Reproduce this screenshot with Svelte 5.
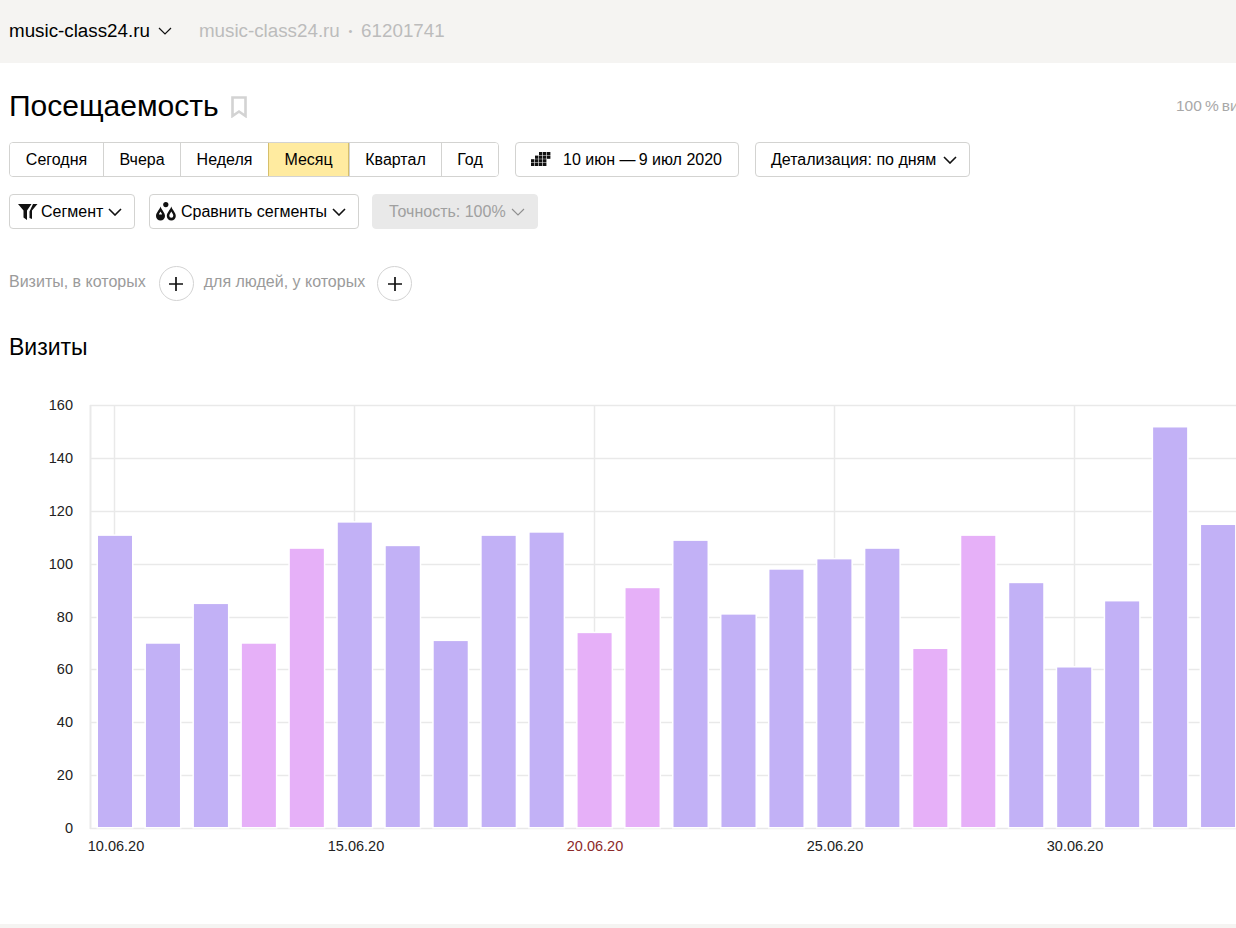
<script>
  const periods = ['Сегодня', 'Вчера', 'Неделя', 'Месяц', 'Квартал', 'Год'];
  const values = [110.5,69.7,84.7,69.7,105.6,115.5,106.6,70.7,110.5,111.7,73.7,90.7,108.6,80.7,97.7,101.6,105.6,67.7,110.5,92.6,60.7,85.7,151.5,114.6];
  const pink = [3,4,10,11,17,18];
  const yTicks = [160,140,120,100,80,60,40,20,0];
  const xTicks = [
    { x: 114.5, tx: 116, label: '10.06.20' },
    { x: 354.5, tx: 356, label: '15.06.20' },
    { x: 594.5, tx: 595, label: '20.06.20', red: true },
    { x: 834.5, tx: 835, label: '25.06.20' },
    { x: 1074.5, tx: 1075, label: '30.06.20' }
  ];
  const base = 438;
  const scale = 423 / 160;
  const yOf = (v) => base - v * scale;
  const cells = [[2,0],[3,0],[4,0],[1,1],[2,1],[3,1],[4,1],[0,2],[1,2],[2,2],[3,2],[0,3],[1,3],[2,3],[3,3]];
</script>

<div class="page">
  <header class="top">
    <span class="site">music-class24.ru</span>
    <svg class="chev-top" width="14" height="8" viewBox="0 0 14 8"><path d="M1 1l6 6 6-6" /></svg>
    <span class="crumb">music-class24.ru <span class="dot">•</span> 61201741</span>
  </header>

  <main class="content">
    <div class="title-row">
      <h1>Посещаемость</h1>
      <svg class="bookmark" width="16" height="22" viewBox="0 0 16 22"><path d="M1.5 1.5h13v18.5L8 15.5 1.5 20z" /></svg>
      <div class="share">100&thinsp;%&thinsp;визитов</div>
    </div>

    <div class="row row-periods">
      <div class="seg">
        {#each periods as p}
          <button class:active={p === 'Месяц'}>{p}</button>
        {/each}
      </div>
      <button class="btn date">
        <svg width="20" height="15" viewBox="0 0 20 15">
          {#each cells as c}<rect x={c[0] * 4} y={c[1] * 3.6} width="3.4" height="3.2" />{/each}
        </svg>
        <span>10 июн —&thinsp;9 июл 2020</span>
      </button>
      <button class="btn detail">
        <span>Детализация: по дням</span>
        <svg class="chev" width="14" height="8" viewBox="0 0 14 8"><path d="M1 1l6 6 6-6" /></svg>
      </button>
    </div>

    <div class="row row-seg">
      <button class="btn segment">
        <svg width="20" height="17" viewBox="0 0 20 17"><path d="M0 1h13.500L9 7.500V17l-3.500-2.500V7.500z" /><path d="M15 1h4.500L14 7.500V16l-2.500-1V8.500z" /></svg>
        <span>Сегмент</span>
        <svg class="chev" width="14" height="8" viewBox="0 0 14 8"><path d="M1 1l6 6 6-6" /></svg>
      </button>
      <button class="btn compare">
        <svg width="20" height="19" viewBox="0 0 20 19">
          <circle cx="9.800" cy="2.600" r="2.600" />
          <path d="M4.500 4.500c1 3.500 4.500 6 4.500 9.500a4.500 4.500 0 0 1-9 0c0-3.500 3.500-6 4.500-9.500zM4.500 9.500C3.800 10.800 3 11.500 3 12.500h3c0-1-.8-1.700-1.500-3z" fill-rule="evenodd" />
          <path d="M15.300 4.500c1 3.500 4.500 6 4.500 9.500a4.500 4.500 0 0 1-9 0c0-3.500 3.500-6 4.500-9.500zM15.300 9.500c-1 1.700-2 2.800-2 4.300a2 2 0 0 0 4 0c0-1.500-1-2.600-2-4.300z" fill-rule="evenodd" />
        </svg>
        <span>Сравнить сегменты</span>
        <svg class="chev" width="14" height="8" viewBox="0 0 14 8"><path d="M1 1l6 6 6-6" /></svg>
      </button>
      <button class="btn accuracy">
        <span>Точность: 100%</span>
        <svg class="chev thin" width="14" height="8" viewBox="0 0 14 8"><path d="M1 1l6 6 6-6" /></svg>
      </button>
    </div>

    <div class="filters">
      <span>Визиты, в которых</span>
      <button class="plus" aria-label="Добавить условие для визитов"><svg width="14" height="14" viewBox="0 0 14 14"><path d="M7 0v14M0 7h14" /></svg></button>
      <span>для людей, у которых</span>
      <button class="plus last" aria-label="Добавить условие для людей"><svg width="14" height="14" viewBox="0 0 14 14"><path d="M7 0v14M0 7h14" /></svg></button>
    </div>

    <h2>Визиты</h2>
  </main>

  <svg class="chart" width="1236" height="500" viewBox="0 0 1236 500">
    {#each yTicks as t}
      <line class="grid" x1="90" x2="1236" y1={Math.round(yOf(t)) + 0.5} y2={Math.round(yOf(t)) + 0.5} />
      <text class="ylab" x="73" y={yOf(t) + 5}>{t}</text>
    {/each}
    <line class="grid axis" x1="90.500" x2="90.500" y1="15" y2="439" />
    {#each xTicks as t}
      <line class="grid" x1={t.x} x2={t.x} y1="15" y2="438" />
      <text class="xlab" class:red={t.red} x={t.tx} y="461">{t.label}</text>
    {/each}
    {#each values as v, i}
      <rect class="bar" class:pink={pink.includes(i)} x={98 + i * 47.96} y={yOf(v)} width="34" height={v * scale - 1} />
    {/each}
  </svg>

  <div class="foot"></div>
</div>

<style>
  :global(body) { margin: 0; background: #fff; }
  .page {
    width: 1236px;
    height: 928px;
    overflow: hidden;
    position: relative;
    font-family: "Liberation Sans", Arial, sans-serif;
    color: #000;
    display: flex;
    flex-direction: column;
  }
  button { font: inherit; color: inherit; background: #fff; margin: 0; }
  .top {
    height: 63px;
    flex: none;
    background: #f5f4f2;
    display: flex;
    align-items: center;
    padding-left: 9px;
    font-size: 18.800px;
    box-sizing: border-box;
    padding-bottom: 2px;
  }
  .chev-top { margin-left: 8px; }
  .chev-top path, .chev path { fill: none; stroke: #111; stroke-width: 1.6; }
  .chev-top path { stroke-width: 1.2; }
  .crumb { margin-left: 27px; color: #bcbcbc; }
  .dot { font-size: 11px; vertical-align: 2px; margin: 0 3.500px; }
  .content { padding-left: 9px; flex: none; height: 327px; box-sizing: border-box; }
  .title-row { height: 79px; display: flex; align-items: center; padding-top: 6px; box-sizing: border-box; }
  h1 { font-size: 30px; font-weight: 400; margin: 0; line-height: 34px; }
  .bookmark { margin-left: 12px; margin-top: 3px; }
  .bookmark path { fill: none; stroke: #d3d3d3; stroke-width: 2.6; }
  .share {
    margin-left: auto;
    width: 60px;
    overflow: hidden;
    white-space: nowrap;
    font-size: 15.500px;
    color: #a8a8a8;
  }
  .row { display: flex; align-items: stretch; height: 35px; font-size: 16px; }
  .row-seg { margin-top: 17px; }
  .seg {
    display: flex;
    border: 1px solid #d3d3d1;
    border-radius: 4px;
    overflow: hidden;
    box-sizing: border-box;
    width: 490px;
    margin-right: 16px;
  }
  .seg button {
    border: 0;
    border-left: 1px solid #d3d3d1;
    padding: 0;
    flex: none;
    font-size: inherit;
  }
  .seg button:nth-child(1) { width: 93px; border-left: 0; }
  .seg button:nth-child(2) { width: 77px; }
  .seg button:nth-child(3) { width: 88px; }
  .seg button:nth-child(4) { width: 81px; }
  .seg button:nth-child(5) { width: 92px; }
  .seg button:nth-child(6) { width: 57px; }
  .seg button.active { background: #ffeba0; border-left-color: #d6bf6b; border-right: 1px solid #d6bf6b; }
  .btn {
    display: flex;
    align-items: center;
    border: 1px solid #d3d3d1;
    border-radius: 4px;
    padding: 0;
    box-sizing: border-box;
    font-size: inherit;
    flex: none;
    white-space: nowrap;
  }
  .date { width: 224px; padding-left: 15px; gap: 12px; margin-right: 16px; }
  .date rect { fill: #111; }
  .detail { width: 215px; padding-left: 15px; gap: 7px; }
  .segment { width: 126px; padding-left: 8px; gap: 3px; margin-right: 14px; }
  .segment span { margin-right: 2px; }
  .segment svg:first-child path { fill: #111; }
  .compare { width: 210px; padding-left: 6px; gap: 5px; margin-right: 13px; }
  .compare svg:first-child { fill: #111; }
  .accuracy { width: 166px; padding-left: 16px; gap: 5px; background: #e9e9e9; border-color: #e9e9e9; color: #a0a0a0; }
  .chev.thin path { stroke: #8f8f8f; stroke-width: 1.1; }
  .filters {
    display: flex;
    align-items: center;
    height: 35px;
    margin-top: 37px;
    font-size: 16px;
    color: #9b9b9b;
  }
  .filters span { position: relative; top: -2px; }
  .plus {
    width: 35px;
    height: 35px;
    border-radius: 50%;
    border: 1px solid #d3d3d3;
    padding: 0;
    margin: 0 10px 0 13px;
    display: flex;
    align-items: center;
    justify-content: center;
    box-sizing: border-box;
  }
  .plus.last { margin-left: 12px; }
  .plus path { stroke: #111; stroke-width: 1.700; fill: none; }
  h2 { font-size: 23px; font-weight: 400; margin: 32px 0 0; line-height: 28px; }
  .chart { display: block; flex: none; margin-top: 0; }
  .grid { stroke: #e9e9e9; stroke-width: 1.500; }
  .axis { stroke-width: 2; }
  .bar { fill: #c2b1f6; stroke: #fff; stroke-width: 3px; paint-order: stroke; }
  .bar.pink { fill: #e6b0f8; }
  .ylab { font-size: 14.500px; text-anchor: end; fill: #222; }
  .xlab { font-size: 14.500px; text-anchor: middle; fill: #222; }
  .xlab.red { fill: #8c2a2a; }
  .foot { position: absolute; left: 0; right: 0; bottom: 0; height: 4px; background: #f5f4f2; }
</style>
